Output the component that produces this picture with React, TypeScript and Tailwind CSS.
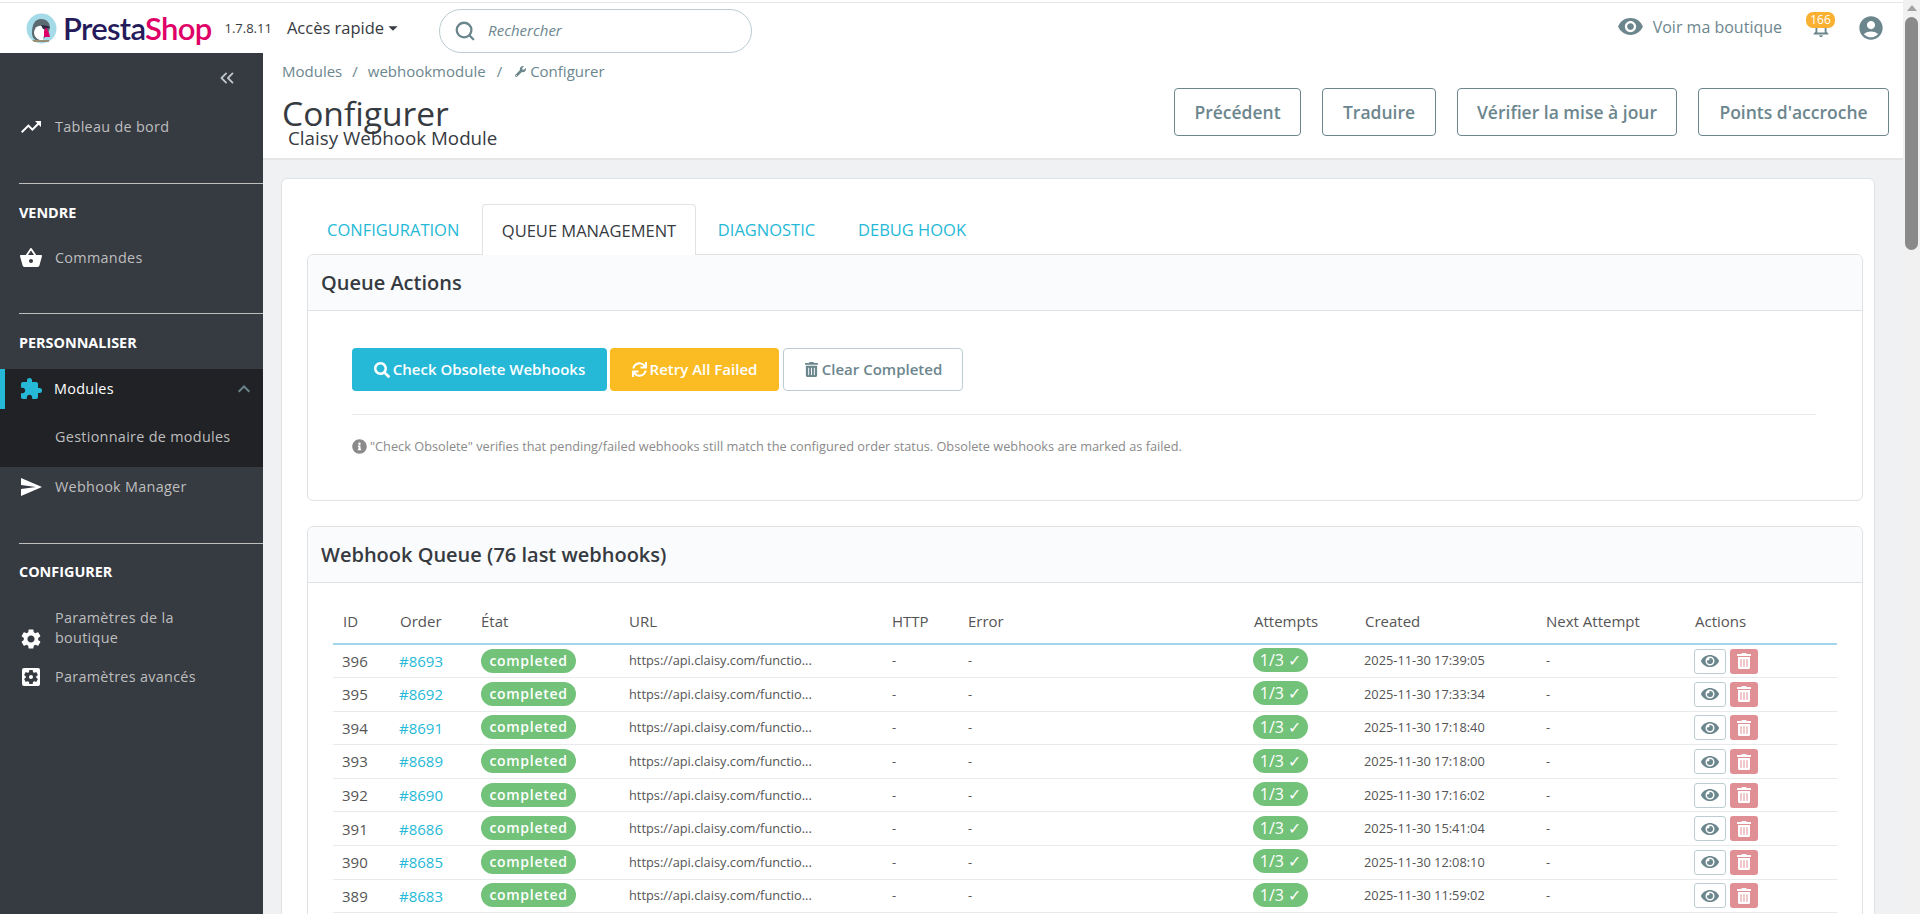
import React from "react";
import { MdTrendingUp, MdShoppingBasket, MdExtension, MdSend, MdSettings, MdSettingsApplications, MdKeyboardArrowUp, MdVisibility, MdAccountCircle, MdNotificationsNone, MdArrowDropDown } from "react-icons/md";
import { FaSearch, FaSync, FaTrashAlt, FaInfoCircle, FaEye, FaWrench } from "react-icons/fa";
import { LuChevronsLeft, LuSearch } from "react-icons/lu";

const rows = [
  ["396", "#8693", "2025-11-30 17:39:05"],
  ["395", "#8692", "2025-11-30 17:33:34"],
  ["394", "#8691", "2025-11-30 17:18:40"],
  ["393", "#8689", "2025-11-30 17:18:00"],
  ["392", "#8690", "2025-11-30 17:16:02"],
  ["391", "#8686", "2025-11-30 15:41:04"],
  ["390", "#8685", "2025-11-30 12:08:10"],
  ["389", "#8683", "2025-11-30 11:59:02"],
];

function Logo() {
  return (
    <svg width="31" height="31" viewBox="0 0 31 31" className="shrink-0">
      <circle cx="15.5" cy="15.5" r="15" fill="#a5dbe8" />
      <path d="M6 20c0-9 3-14 9-14s9 4 9 9l-3 8-7 5c-5 0-8-3-8-8z" fill="#5b6a70" />
      <path d="M8 19c1-5 4-7 8-6l3 5-2 9c-5 1-9-3-9-8z" fill="#ffffff" />
      <path d="M15 12l7 1 2 2-7 1z" fill="#2c2440" />
      <path d="M20 14l3 6 1 4-6 0 0-6z" fill="#df0067" />
      <path d="M6 27h17v2H8z" fill="#9a8f74" />
    </svg>
  );
}

function Sidebar() {
  const label = "text-[14.4px] text-[#bebebe] tracking-[0.3px]";
  const head = "pl-[19px] text-[14.4px] leading-[20px] font-bold text-white";
  return (
    <aside className="w-[263px] shrink-0 bg-[#363a41] h-[861px] overflow-hidden">
      <div className="flex justify-end pr-[25px] pt-[14px] h-[50px]">
        <LuChevronsLeft className="text-[#bcc7cb]" size={22} />
      </div>
      <div className="flex items-center h-[48px]">
        <div className="w-[55px] pl-[19px] shrink-0"><MdTrendingUp className="text-white" size={24} /></div>
        <span className={label}>Tableau de bord</span>
      </div>
      <div className="ml-[19px] h-px bg-[#bebebe] mt-[32px]" />
      <div className={`${head} pt-[19px]`}>VENDRE</div>
      <div className="flex items-center h-[40px] mt-[15px]">
        <div className="w-[55px] pl-[19px] shrink-0"><MdShoppingBasket className="text-white" size={24} /></div>
        <span className={label}>Commandes</span>
      </div>
      <div className="ml-[19px] h-px bg-[#bebebe] mt-[35px]" />
      <div className={`${head} pt-[19px]`}>PERSONNALISER</div>
      <div className="mt-[16px] bg-[#202226] h-[98px]">
        <div className="flex items-center h-[40px] border-l-[5px] border-[#25b9d7]">
          <div className="w-[49px] pl-[14px] shrink-0"><MdExtension className="text-[#25b9d7]" size={24} /></div>
          <span className="text-[14.4px] text-white tracking-[0.3px]">Modules</span>
          <MdKeyboardArrowUp className="ml-auto mr-[7px] text-[#6c868e]" size={24} />
        </div>
        <div className={`pl-[55px] pt-[18px] leading-[20px] ${label}`}>Gestionnaire de modules</div>
      </div>
      <div className="flex items-center h-[40px]">
        <div className="w-[55px] pl-[19px] shrink-0"><MdSend className="text-white" size={24} /></div>
        <span className={label}>Webhook Manager</span>
      </div>
      <div className="ml-[19px] h-px bg-[#bebebe] mt-[36px]" />
      <div className={`${head} pt-[18px]`}>CONFIGURER</div>
      <div className="flex items-center mt-[26px] h-[40px]">
        <div className="w-[55px] pl-[19px] pt-[22px] shrink-0"><MdSettings className="text-white" size={24} /></div>
        <span className={`leading-[20px] ${label}`}>Paramètres de la<br />boutique</span>
      </div>
      <div className="flex items-center h-[40px] mt-[9px]">
        <div className="w-[55px] pl-[19px] shrink-0"><MdSettingsApplications className="text-white" size={24} /></div>
        <span className={label}>Paramètres avancés</span>
      </div>
    </aside>
  );
}

function Top() {
  return (
    <div className="pt-[2px] bg-white shrink-0">
      <header className="h-[51px] bg-white flex items-center border-t border-[#e4e6e8] box-border relative">
        <div className="ml-[26px] flex items-center gap-[6px]">
          <Logo />
          <span className="text-[31px] leading-[36px] font-semibold tracking-[-0.7px] font-['Lato',sans-serif]"><span className="text-[#251b5b]">Presta</span><span className="text-[#df0067]">Shop</span></span>
        </div>
        <span className="ml-[13px] text-[13px] text-[#363a41] mt-[2px]">1.7.8.11</span>
        <span className="ml-[15px] text-[16.5px] text-[#363a41] flex items-center">Accès rapide<MdArrowDropDown size={22} className="-ml-[2px]" /></span>
        <div className="ml-[35px] mt-[5px] w-[313px] h-[44px] rounded-[22px] border border-[#bbcdd2] flex items-center pl-[14px]">
          <LuSearch size={22} strokeWidth={2.5} className="text-[#6c868e]" />
          <span className="ml-[12px] text-[15px] italic text-[#6c868e]">Rechercher</span>
        </div>
        <div className="ml-auto flex items-center text-[#6c868e] relative pr-[18px]">
          <MdVisibility size={27} className="mb-[4px]" />
          <span className="ml-[9px] text-[16px] mr-[24px] mb-[2px]">Voir ma boutique</span>
          <div className="relative w-[29px] h-[28px] flex justify-center mb-[4px]">
            <MdNotificationsNone size={22} className="mt-[5px]" />
            <span className="absolute top-0 left-0 w-[29px] h-[16px] rounded-[7px] bg-[#fab131] text-white text-[12px] leading-[16px] text-center">166</span>
          </div>
          <MdAccountCircle size={28} className="ml-[22px]" />
        </div>
      </header>
    </div>
  );
}

function TopBtn({ w, children }: { w: string; children: React.ReactNode }) {
  return (
    <div className={`${w} h-[48px] rounded-[4px] border border-[#6c868e] text-[#6c868e] text-[17.5px] font-semibold flex items-center justify-center`}>{children}</div>
  );
}

function Table() {
  const heads = ["ID", "Order", "État", "URL", "HTTP", "Error", "Attempts", "Created", "Next Attempt", "Actions"];
  return (
    <table className="w-[1504px] table-fixed border-collapse">
      <colgroup>
        <col className="w-[57px]" /><col className="w-[81px]" /><col className="w-[148px]" /><col className="w-[263px]" /><col className="w-[76px]" /><col className="w-[286px]" /><col className="w-[111px]" /><col className="w-[181px]" /><col className="w-[149px]" /><col className="w-[152px]" />
      </colgroup>
      <thead>
        <tr className="h-[45px] border-b-2 border-[#a3d5ee]">
          {heads.map((h) => (
            <th key={h} className="pl-[10px] text-left text-[15px] font-normal text-[#555555] align-middle">{h}</th>
          ))}
        </tr>
      </thead>
      <tbody>
        {rows.map((r) => (
          <tr key={r[0]} className="h-[33.6px] border-b border-[#e8eaec] text-[#555555]">
            <td className="pl-[9px] text-[15px]">{r[0]}</td>
            <td className="pl-[9px] text-[15px] text-[#25b9d7]">{r[1]}</td>
            <td className="pl-[10px]">
              <span className="inline-block -translate-y-px h-[24px] w-[95px] rounded-[12px] bg-[#72c279] text-white text-[14px] leading-[24px] text-center tracking-[0.7px] font-semibold">completed</span>
            </td>
            <td className="pl-[10px] text-[12.8px]">https://api.claisy.com/functio...</td>
            <td className="pl-[10px] text-[12.8px]">-</td>
            <td className="pl-[10px] text-[12.8px]">-</td>
            <td className="pl-[9px]">
              <span className="inline-block -translate-y-px h-[24px] w-[55px] rounded-[12px] bg-[#72c279] text-white text-[16px] leading-[24px] text-center">1/3 ✓</span>
            </td>
            <td className="pl-[9px] text-[12.8px]">{r[2]}</td>
            <td className="pl-[10px] text-[12.8px]">-</td>
            <td className="pl-[9px]">
              <div className="flex gap-[4px] items-center">
                <span className="w-[32px] h-[25px] rounded-[3px] border border-[#bbcdd2] bg-white flex items-center justify-center text-[#6c868e]"><FaEye size={18} /></span>
                <span className="w-[28px] h-[25px] rounded-[3px] bg-[#e08f95] flex items-center justify-center text-white"><FaTrashAlt size={16} /></span>
              </div>
            </td>
          </tr>
        ))}
      </tbody>
    </table>
  );
}

function Content() {
  return (
    <main className="flex-1 min-w-0 bg-[#eff1f2] h-[861px] overflow-hidden">
      <div className="h-[105px] bg-white border-b-2 border-[#e4e6e8] box-content relative">
        <div className="flex items-center pl-[19px] pt-[8px] text-[15px] leading-[20px] text-[#6c868e]">
          <span>Modules</span><span className="mx-[10px]">/</span><span>webhookmodule</span><span className="mx-[11px]">/</span>
          <FaWrench size={11} className="mr-[4px] ml-[2px]" /><span>Configurer</span>
        </div>
        <div className="flex justify-between pl-[19px] pr-[14px]">
          <div>
            <div className="text-[33.6px] leading-[44px] text-[#363a41] mt-[10px]">Configurer</div>
            <div className="text-[18.75px] leading-[24px] text-[#363a41] ml-[6px] -mt-[9px]">Claisy Webhook Module</div>
          </div>
          <div className="flex gap-[21px] mt-[7px]">
            <TopBtn w="w-[127px]">Précédent</TopBtn>
            <TopBtn w="w-[114px]">Traduire</TopBtn>
            <TopBtn w="w-[220px]">Vérifier la mise à jour</TopBtn>
            <TopBtn w="w-[191px]">Points d'accroche</TopBtn>
          </div>
        </div>
      </div>
      <div className="ml-[18px] mr-[28px] mt-[18px] bg-white rounded-t-[6px] border border-[#dfe3e6] pt-[25px] pl-[25px] pr-[11px] h-[800px]">
        <div className="flex h-[51px] relative z-10 text-[16.5px] text-[#25b9d7]">
          <div className="w-[175px] flex items-center pl-[20px] pt-[2px]">CONFIGURATION</div>
          <div className="w-[214px] flex items-center justify-center pt-[2px] bg-white border border-b-0 border-[#dfe3e6] rounded-t-[4px] text-[#363a41]">QUEUE MANAGEMENT</div>
          <div className="w-[141px] flex items-center justify-center pt-[2px]">DIAGNOSTIC</div>
          <div className="flex items-center pl-[21px] pt-[2px]">DEBUG HOOK</div>
        </div>
        <section className="border border-[#dfe3e6] rounded-[6px] h-[247px] -mt-[1px]">
          <div className="h-[56px] bg-[#fafbfc] rounded-t-[6px] border-b border-[#dfe3e6] flex items-center pl-[13px] text-[20px] font-semibold text-[#363a41]">Queue Actions</div>
          <div className="pt-[37px] pl-[44px] pr-[46px]">
            <div className="flex gap-[3px]">
              <div className="w-[255px] h-[43px] rounded-[4px] bg-[#25b9d7] text-white text-[15px] font-semibold flex items-center justify-center gap-[3px]"><FaSearch size={16} />Check Obsolete Webhooks</div>
              <div className="w-[169px] h-[43px] rounded-[4px] bg-[#fbbb22] text-white text-[15px] font-semibold flex items-center justify-center gap-[3px]"><FaSync size={15} />Retry All Failed</div>
              <div className="w-[180px] h-[43px] rounded-[4px] border border-[#bbcdd2] bg-white text-[#6c868e] text-[15px] font-semibold flex items-center justify-center gap-[3px] ml-[1px]"><FaTrashAlt size={15} />Clear Completed</div>
            </div>
            <div className="h-px bg-[#e8eaec] mt-[23px]" />
            <div className="flex items-center gap-[3px] mt-[21px] text-[12.75px] leading-[20px] text-[#8a8a8a]">
              <FaInfoCircle size={15} />"Check Obsolete" verifies that pending/failed webhooks still match the configured order status. Obsolete webhooks are marked as failed.
            </div>
          </div>
        </section>
        <section className="border border-[#dfe3e6] rounded-[6px] mt-[25px] h-[500px]">
          <div className="h-[56px] bg-[#fafbfc] rounded-t-[6px] border-b border-[#dfe3e6] flex items-center pl-[13px] text-[20px] font-semibold text-[#363a41]">Webhook Queue (76 last webhooks)</div>
          <div className="pl-[25px] pt-[16px]"><Table /></div>
        </section>
      </div>
    </main>
  );
}

function Scrollbar() {
  return (
    <div className="w-[17px] shrink-0 bg-[#f1f1f1] flex flex-col items-center h-[914px]">
      <div className="w-0 h-0 mt-[5px] border-x-[5px] border-x-transparent border-b-[6px] border-b-[#a3a3a3]" />
      <div className="w-[13px] h-[233px] mt-[6px] rounded-full bg-[#8a8a8a]" />
    </div>
  );
}

export default function App() {
  return (
    <div className="flex h-[914px] overflow-hidden bg-white font-['Open_Sans',sans-serif]">
      <div className="flex-1 min-w-0 flex flex-col">
        <Top />
        <div className="flex">
          <Sidebar />
          <Content />
        </div>
      </div>
      <Scrollbar />
    </div>
  );
}
